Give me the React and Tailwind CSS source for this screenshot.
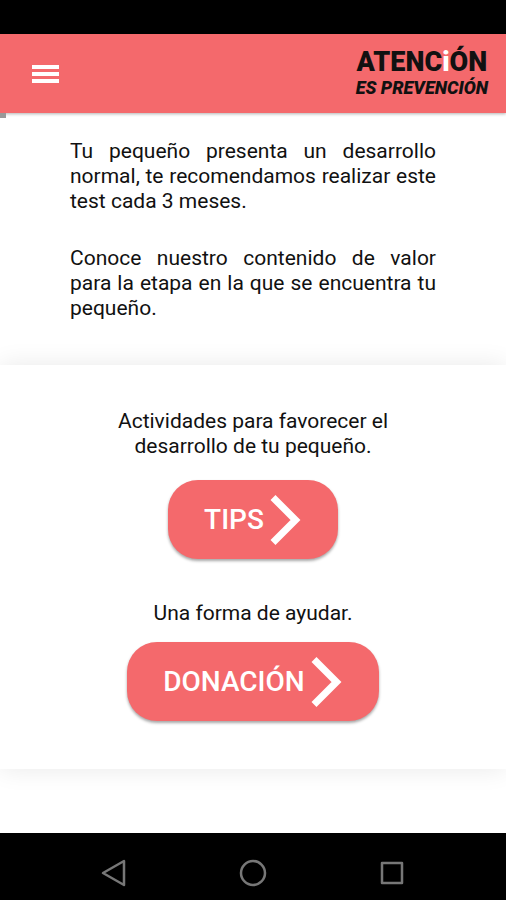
function Chevron() {
  return (
    <svg className="w-8 h-[50px] shrink-0" viewBox="0 0 32 50" fill="none" aria-hidden="true">
      <path d="M3 2.5L25.5 25L3 47.5" stroke="currentColor" strokeWidth="7" />
    </svg>
  );
}

function ActionButton({ children }) {
  return (
    <button
      type="button"
      className="flex items-center gap-[6px] h-[79px] px-9 rounded-[30px] bg-[#f4696c] text-white text-[28px] leading-8 font-medium shadow-[0_2px_3px_rgba(0,0,0,0.35)]"
    >
      {children}
      <Chevron />
    </button>
  );
}

function Logo() {
  return (
    <div className="flex flex-col items-center text-[#111]">
      <span className="text-[27px] leading-7 font-black">
        ATENC<span className="text-white">i</span>ÓN
      </span>
      <span className="text-[18px] leading-6 font-black italic">ES PREVENCIÓN</span>
    </div>
  );
}

export default function App() {
  return (
    <div className="min-h-screen flex flex-col bg-white text-[#111] font-['Roboto',sans-serif]">
      {/* Status bar */}
      <div className="h-[34px] bg-black" />

      <header className="h-[79px] pl-8 pr-[18px] flex items-center justify-between bg-[#f4696c] shadow-[0_1px_3px_rgba(0,0,0,0.3)]">
        <button type="button" aria-label="Menú" className="text-white">
          <svg className="w-[27px] h-5" viewBox="0 0 27 20" fill="currentColor">
            <path d="M0 1h27v4H0zM0 8h27v4H0zM0 15h27v4H0z" />
          </svg>
        </button>
        <Logo />
      </header>

      <main className="flex-1 flex flex-col">
        {/* Progress */}
        <div className="h-[5px] w-[6px] bg-[#999]" />

        <section className="px-[70px] pt-[21px] pb-11 flex flex-col gap-8 text-[21px] leading-[25px] text-justify">
          <p>Tu pequeño presenta un desarrollo normal, te recomendamos realizar este test cada 3 meses.</p>
          <p>Conoce nuestro contenido de valor para la etapa en la que se encuentra tu pequeño.</p>
        </section>

        <section className="pt-11 pb-12 px-10 flex flex-col items-center text-center text-[21px] leading-[25px] bg-white shadow-[0_0_24px_rgba(0,0,0,0.09)]">
          <p className="max-w-[300px]">Actividades para favorecer el desarrollo de tu pequeño.</p>
          <div className="mt-[21px] mb-[42px]">
            <ActionButton>TIPS</ActionButton>
          </div>
          <p>Una forma de ayudar.</p>
          <div className="mt-4">
            <ActionButton>DONACIÓN</ActionButton>
          </div>
        </section>
      </main>

      {/* System navigation */}
      <nav className="h-[67px] pt-[13px] px-[100px] flex items-center justify-between bg-black text-[#777]">
        <button type="button" aria-label="Atrás">
          <svg className="w-7 h-7" viewBox="0 0 28 28" fill="none" stroke="currentColor" strokeWidth="2.5">
            <path d="M24 2v24L3 14z" strokeLinejoin="round" />
          </svg>
        </button>
        <button type="button" aria-label="Inicio">
          <svg className="w-7 h-7" viewBox="0 0 28 28" fill="none" stroke="currentColor" strokeWidth="2.5">
            <circle cx="14" cy="14" r="12" />
          </svg>
        </button>
        <button type="button" aria-label="Recientes">
          <svg className="w-7 h-7" viewBox="0 0 28 28" fill="none" stroke="currentColor" strokeWidth="2.5">
            <path d="M4 4h20v20H4z" strokeLinejoin="round" />
          </svg>
        </button>
      </nav>
    </div>
  );
}
